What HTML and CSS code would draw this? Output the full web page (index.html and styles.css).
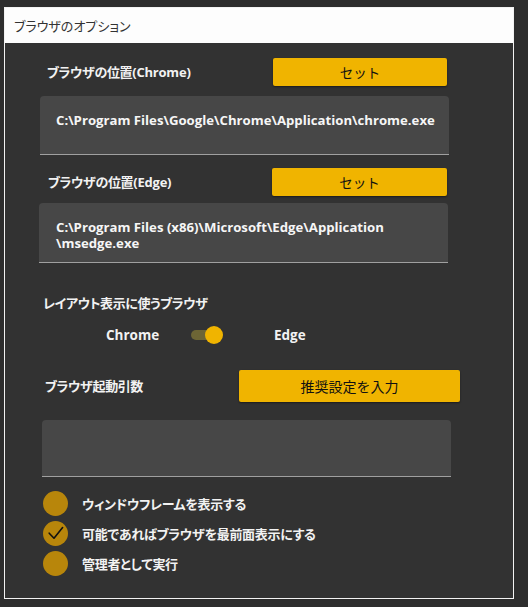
FILE: index.html
```html
<!DOCTYPE html>
<html lang="ja">
<head>
<meta charset="utf-8">
<title>ブラウザのオプション</title>
<link rel="stylesheet" href="styles.css">
</head>
<body>
<div class="window">
  <div class="header">ブラウザのオプション</div>
  <div class="content">
    <div class="row row-chrome">
      <span class="label label-chrome">ブラウザの位置<span class="lat">(Chrome)</span></span>
      <button class="btn btn-set1">セット</button>
    </div>
    <div class="textbox tb1"><span class="path">C:\Program Files\Google\Chrome\Application\chrome.exe</span></div>

    <div class="row row-edge">
      <span class="label label-edge">ブラウザの位置<span class="lat">(Edge)</span></span>
      <button class="btn btn-set2">セット</button>
    </div>
    <div class="textbox tb2"><span class="path">C:\Program Files (x86)\Microsoft\Edge\Application</span><span class="path">\msedge.exe</span></div>

    <div class="label label-layout">レイアウト表示に使うブラウザ</div>
    <div class="toggle-row">
      <span class="opt opt-chrome">Chrome</span>
      <span class="toggle"><span class="track"></span><span class="thumb"></span></span>
      <span class="opt opt-edge">Edge</span>
    </div>

    <div class="row row-args">
      <span class="label label-args">ブラウザ起動引数</span>
      <button class="btn btn-reco">推奨設定を入力</button>
    </div>
    <div class="textbox tb3"></div>

    <div class="checks">
      <div class="check"><span class="box"></span><span class="ctext">ウィンドウフレームを表示する</span></div>
      <div class="check"><span class="box checked"><svg viewBox="0 0 25 25" width="25" height="25"><path d="M6.2 12.2 L11 17.2 L19.6 6.6" fill="none" stroke="#111" stroke-width="1.6" stroke-linecap="round" stroke-linejoin="round"/></svg></span><span class="ctext">可能であればブラウザを最前面表示にする</span></div>
      <div class="check"><span class="box"></span><span class="ctext">管理者として実行</span></div>
    </div>
  </div>
</div>
</body>
</html>
```

FILE: styles.css
```css
html, body {
  margin: 0;
  padding: 0;
  background: #2d2d2d;
}
body {
  padding: 7px 0 0 4px;
  font-family: "Open Sans", "Noto Sans CJK JP", sans-serif;
  font-feature-settings: "palt";
}
.window {
  width: 508px;
  height: 590px;
  border: 1px solid #f2f2f2;
  background: #323232;
  display: flex;
  flex-direction: column;
}
.header {
  height: 35px;
  background: #fdfdfd;
  color: #333;
  font-family: "Noto Sans CJK JP", sans-serif;
  font-size: 13px;
  line-height: 35px;
  padding-left: 9px;
}
.content {
  display: flex;
  flex-direction: column;
  align-items: flex-start;
}
.row {
  display: flex;
  align-items: center;
}
.label {
  color: #f2f2f2;
  font-family: "Noto Sans CJK JP", sans-serif;
  font-size: 13px;
  font-weight: 700;
  line-height: 20px;
  letter-spacing: -0.4px;
}
.lat {
  font-family: "Open Sans", sans-serif;
  font-weight: 700;
  letter-spacing: -0.2px;
}
.btn {
  border: none;
  border-radius: 2px;
  background: #f0b400;
  color: #111;
  font-family: "Noto Sans CJK JP", sans-serif;
  font-size: 13.5px;
  padding: 0;
  box-shadow: 0 1px 2px rgba(0,0,0,0.45);
}
.row-chrome { margin-top: 15px; margin-left: 42px; height: 28px; }
.label-chrome { width: 226px; }
.btn-set1 { width: 174px; height: 28px; }

.textbox {
  background: #474747;
  border-radius: 4px 4px 0 0;
  border-bottom: 1px solid #a0a0a0;
  width: 409px;
  box-sizing: border-box;
}
.path {
  display: block;
  color: #f6f6f6;
  font-size: 13.2px;
  font-weight: 700;
  line-height: 16px;
}
.tb1 { margin-top: 10px; margin-left: 35px; height: 59px; padding: 16px 0 0 16px; }

.row-edge { margin-top: 13px; margin-left: 43px; height: 28px; }
.label-edge { width: 224px; }
.btn-set2 { width: 175px; height: 28px; }
.tb2 { margin-top: 7px; margin-left: 34px; height: 60px; padding: 16px 0 0 17px; }

.label-layout { margin-top: 30px; margin-left: 38px; }

.toggle-row {
  margin-top: 12px;
  margin-left: 101px;
  height: 20px;
  display: flex;
  align-items: center;
}
.opt {
  color: #f2f2f2;
  font-size: 13.5px;
  font-weight: 700;
}
.opt-chrome { width: 85px; }
.toggle {
  position: relative;
  width: 32px;
  height: 18px;
  margin-right: 51px;
}
.track {
  position: absolute;
  left: 0;
  top: 4px;
  width: 26px;
  height: 10px;
  border-radius: 5px;
  background: #6d6535;
}
.thumb {
  position: absolute;
  left: 14px;
  top: 0;
  width: 18px;
  height: 18px;
  border-radius: 50%;
  background: #f0b400;
}

.row-args { margin-top: 25px; margin-left: 40px; height: 32px; }
.label-args { width: 194px; }
.btn-reco { width: 221px; height: 32px; font-size: 14px; }
.tb3 { margin-top: 18px; margin-left: 37px; height: 57px; }

.checks { margin-top: 11px; margin-left: 38px; display: flex; flex-direction: column; }
.check { height: 30px; display: flex; align-items: center; }
.box {
  width: 25px;
  height: 25px;
  border-radius: 50%;
  background: #b8860b;
  margin-right: 14px;
  display: block;
}
.box svg { display: block; }
.ctext {
  color: #f2f2f2;
  font-family: "Noto Sans CJK JP", sans-serif;
  font-size: 13px;
  font-weight: 700;
  letter-spacing: -0.3px;
}
```
